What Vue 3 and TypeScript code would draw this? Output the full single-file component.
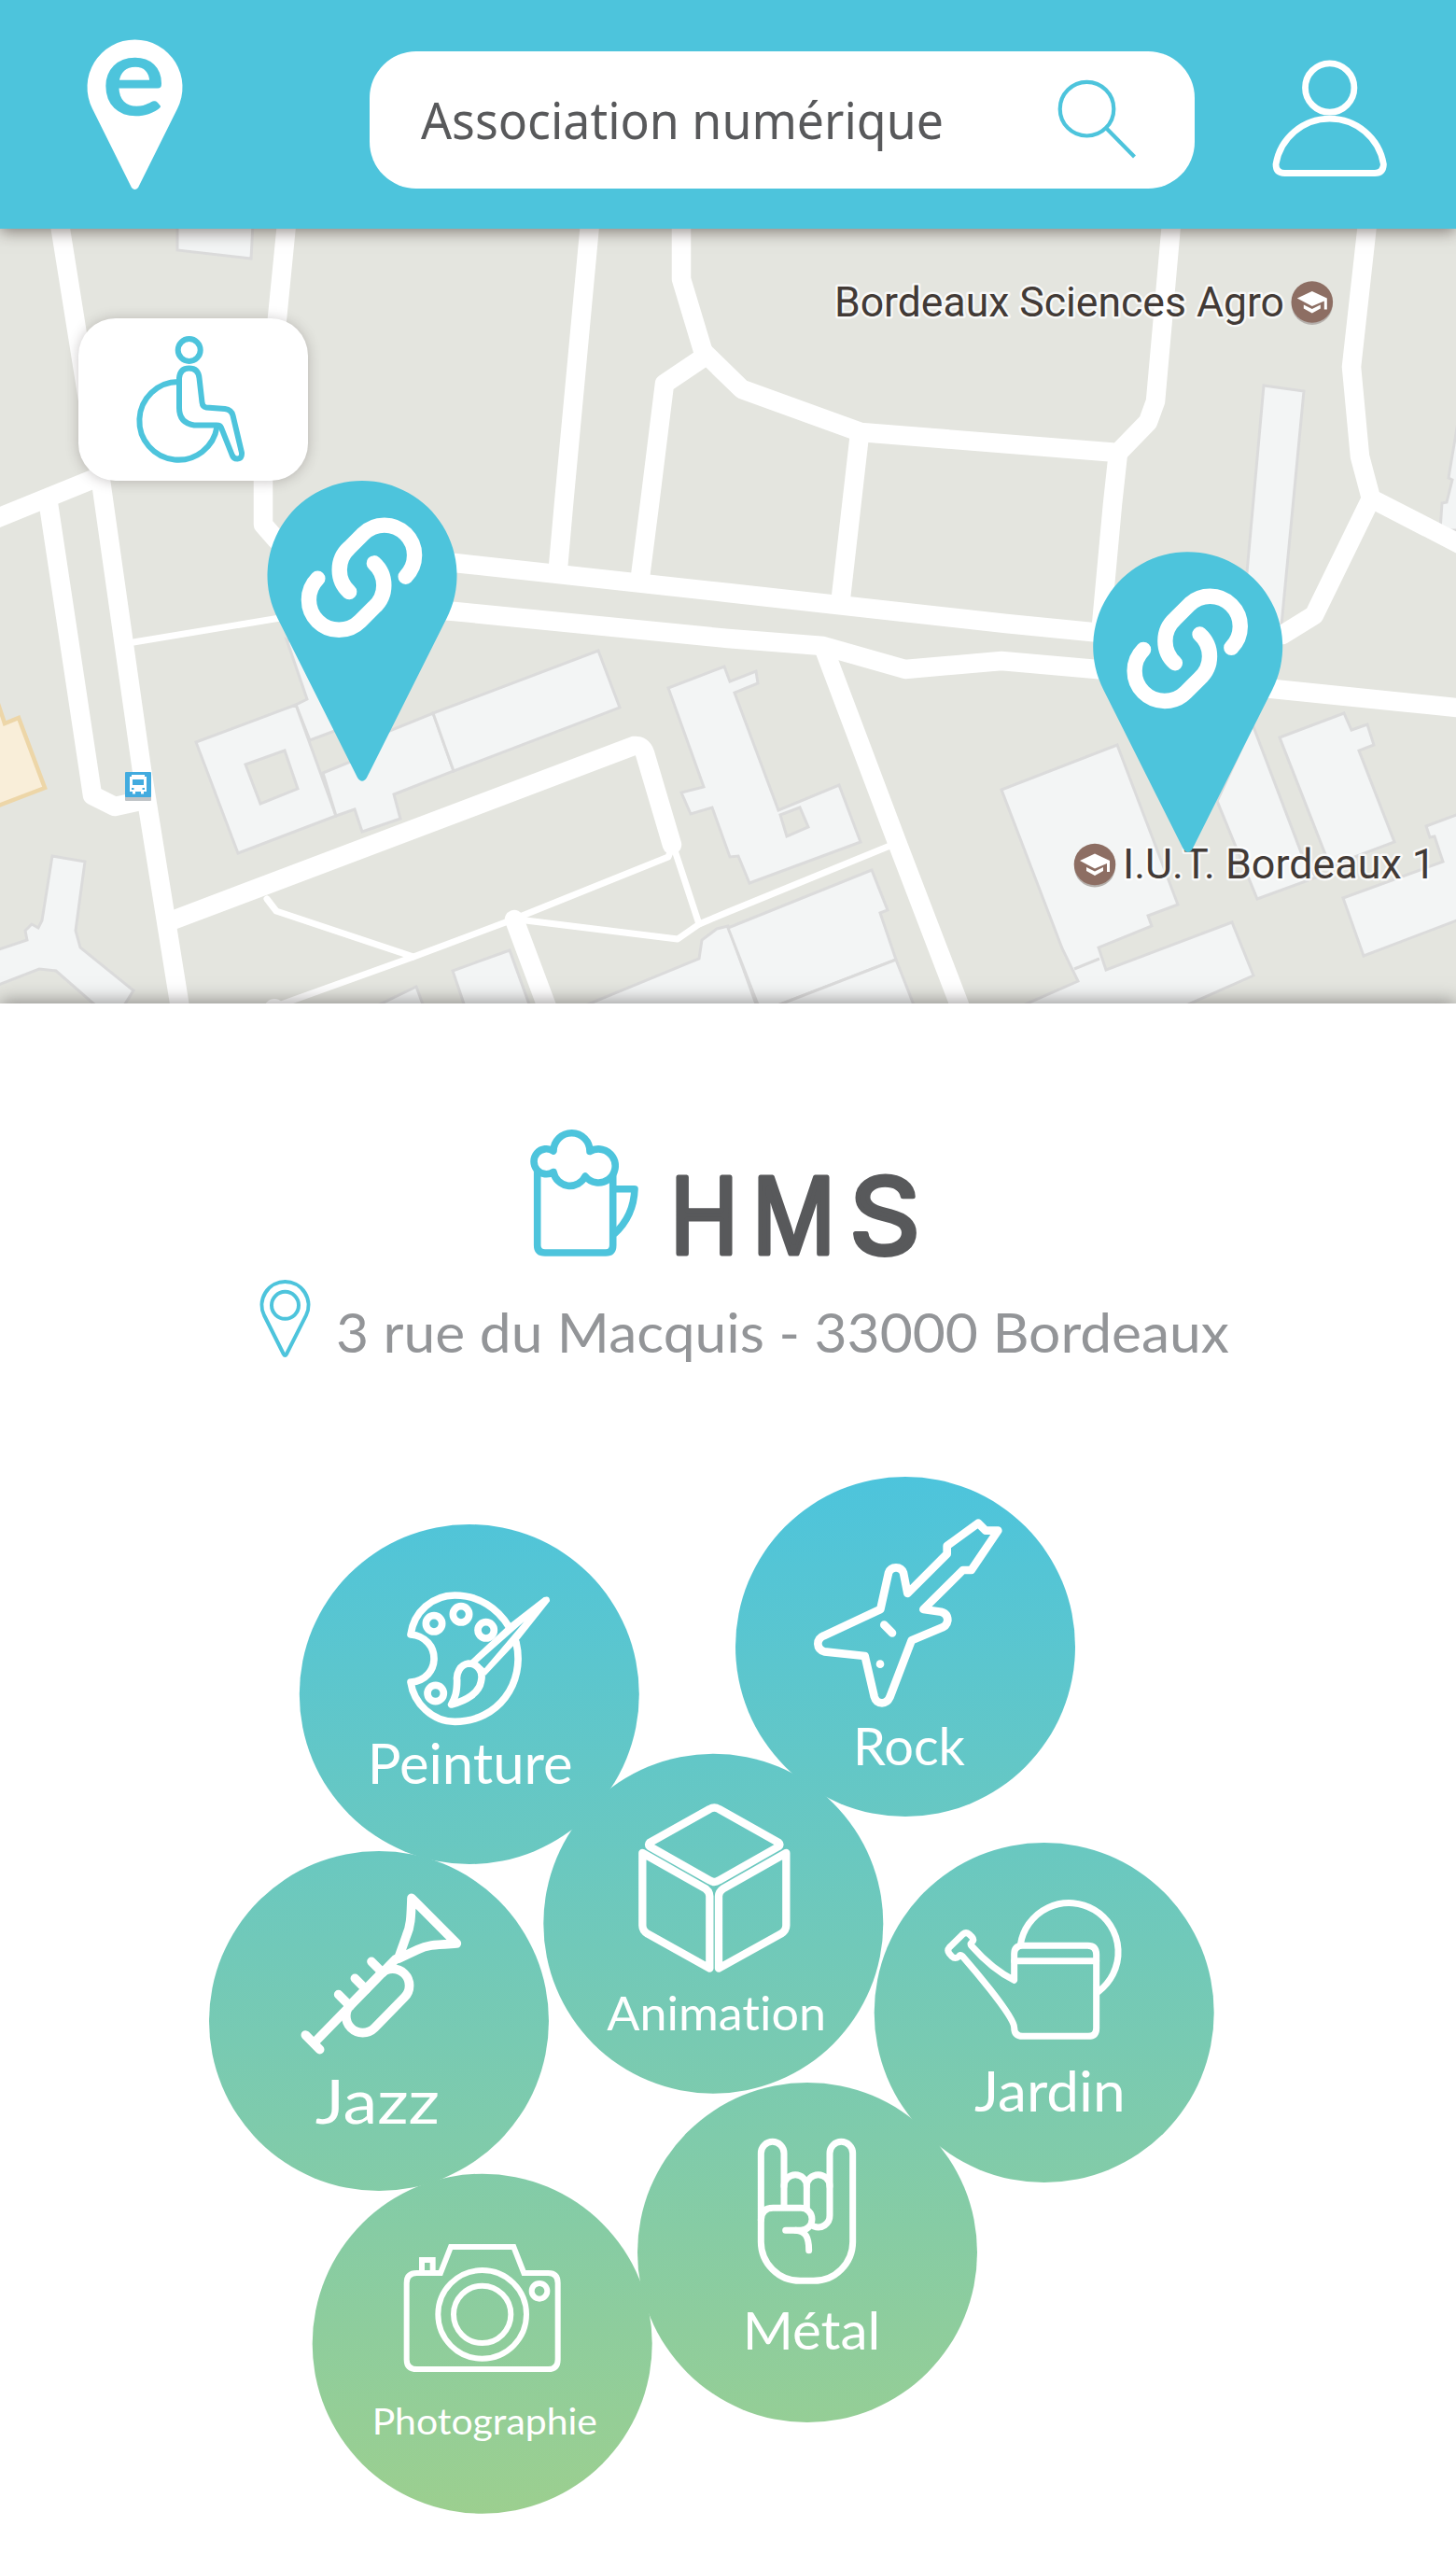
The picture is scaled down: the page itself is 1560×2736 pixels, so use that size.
<script setup lang="ts">
interface Label {
  text: string
  x: number
  y: number
  size: number
  length: number
}

interface Bubble {
  cx: number
  cy: number
  left: number
  top: number
  stroke: number
  label: Label
  lines: string[]
  rings?: number[][]
  fills?: string[]
  sharp?: boolean
}

const query = 'Association numérique'

const roads: string[] = [
  'M64 240L84 365L108 515L152 825L193 1080',
  'M-10 558L98 514',
  'M52 540L99 852L123 864L155 857',
  'M307 240L297 341L282 515V562L296 578L330 588L487 603L780 635L1078 668L1200 680L1374 680L1408 659L1469 534',
  'M300 640L487 655L780 684L882 692L970 717L1073 708L1175 717L1364 738L1570 759',
  'M632 240L604 540L598 608',
  'M730 240V299L755 382L712 411L696 540L686 618',
  'M755 378L795 417L922 463L1198 485L1230 452L1238 430L1255 240',
  'M921 465L901 640',
  'M1198 485L1192 540L1180 670',
  'M1465 240L1448 393L1457 489L1469 534L1570 586',
  'M182 987L679 799Q688 798 691 807L720 905',
  'M551 985L588 1084',
  'M884 698L961 902L1030 1082',
]

const paths: string[] = [
  'M143 688L300 662',
  'M286 963L296 976L443 1025',
  'M290 1080L443 1025L547 986L716 918L721 905L749 990',
  'M555 985L726 1006L749 990L780 977L956 905',
]

const buildings: string[] = [
  'M190 240V268L269 277L271 240Z',
  'M56 917L91 923L81 997L86 1015L143 1061L130 1082H108L60 1040L42 1038L-4 1056V1018L29 1007L27 997L34 990L41 994L45 986Z',
  'M307 685L329 749L317 755L332 793L380 775L340 700Z',
  'M210 795L317 755L360 874L255 914ZM263 819L305 804L319 845L279 861Z',
  'M346 828L378 815L400 790L464 764L486 826L422 851L429 877L388 891L380 867L360 874Z',
  'M464 764L641 697L664 758L486 826Z',
  'M716 737L776 714L782 730L810 719L812 732L787 742L834 868L899 841L922 902L803 946L791 917L782 918L763 865L740 872L730 849L754 843ZM836 873L857 865L866 886L843 896Z',
  'M485 1040L546 1018L570 1084H500Z',
  'M390 1084L446 1057L456 1084Z',
  'M610 1084L749 1027L752 1007L768 995L780 992L813 1084Z',
  'M780 994L934 932L951 975L943 978L960 1028L815 1084Z',
  'M960 1028L982 1084H815Z',
  'M1354 413L1397 419L1372 680H1330Z',
  'M1564 440L1552 512L1556 514L1550 538L1545 539L1543 568H1570Z',
  'M1073 846L1197 798L1262 969L1230 981L1234 992L1177 1015L1185 1039L1320 988L1343 1045L1255 1084H1080L1155 1051L1138 1016ZM1151 1038L1178 1027',
  'M1342 776L1394 913L1410 940L1347 963L1304 858Z',
  'M1371 790L1440 764L1448 782L1465 776L1472 798L1456 804L1494 902L1425 928Z',
  'M1566 871L1528 885L1532 897L1537 896L1546 923L1439 962L1461 1024L1566 984Z',
]

const pins: number[][] = [
  [388, 616.5],
  [1272.7, 692.7],
]

const schools: number[][] = [
  [1405.8, 323.5],
  [1173, 926],
]

const bubbles: Bubble[] = [
  {
    cx: 502.8, cy: 1815, left: 300, top: 1600, stroke: 23,
    label: { text: 'Peinture', x: 281, y: 933, size: 178, length: 660 },
    lines: [
      'M735 427C700 370 640 327 562 327C490 327 430 380 420 453C520 462 520 598 420 606C430 675 490 733 562 733C700 733 790 610 759 478',
      'M606 546C578 549 566 580 569 600C569 640 563 655 551 678C600 665 640 640 646 605C655 570 635 548 606 546Z',
    ],
    rings: [[495, 418, 26], [582, 388, 26], [662, 439, 26], [500, 642, 26]],
    fills: ['M608 540L740 417L848 333Q868 326 867 346L768 470L661 584ZM635 543L785 411L657 562Z'],
  },
  {
    cx: 970, cy: 1764, left: 780, top: 1570, stroke: 26,
    label: { text: 'Rock', x: 402, y: 963, size: 167, length: 360 },
    lines: [
      'M804 185L828 209H868L782 336H755L628 462L685 470Q706 475 706 498Q704 513 690 520L590 562L520 745Q512 763 495 763Q476 763 470 742L440 612L310 598Q290 592 289 573Q289 555 308 547L490 462L516 345Q522 328 540 328Q558 328 564 345L577 411L704 284V258Z',
      'M502 512L528 538',
      'M489 638V638.1',
    ],
  },
  {
    cx: 406, cy: 2165, left: 210, top: 1970, stroke: 29,
    label: { text: 'Jazz', x: 383, y: 915, size: 200, length: 400 },
    lines: [
      'M693 190L838 336C770 340 745 340 712 356L650 385L676 312C690 280 691 255 693 190Z',
      'M642 386L385 650',
      'M352 630L398 677',
      'M564 394L600 430M511 448L547 484M458 500L495 537',
      'M594 433A53.500 53.500 0 0 1 670 509L574 607A53.500 53.500 0 0 1 498 531Z',
    ],
  },
  {
    cx: 764.3, cy: 2060.7, left: 570, top: 1870, stroke: 25,
    label: { text: 'Animation', x: 241, y: 914, size: 150, length: 704 },
    lines: [
      'M571 204Q586 195 601 204L793 312Q800 318 793 324L601 433Q586 443 571 433L378 324Q372 318 378 312Z',
      'M355 345L558 460Q571 470 571 484V716L372 605Q355 594 355 578Z',
      'M817 345L614 460Q600 470 600 484V716L800 605Q817 594 817 578Z',
    ],
  },
  {
    cx: 1118.7, cy: 2156, left: 930, top: 1960, stroke: 21,
    label: { text: 'Jardin', x: 342, y: 906, size: 178, length: 485 },
    lines: [
      'M497 373H706Q734 373 734 402V638Q734 664 708 664H497Q470 664 470 636Q470 612 392 513Q350 460 303 406Q296 400 292 408Q280 417 270 408L262 399Q253 388 262 378L305 336Q315 328 325 336L335 346Q343 355 333 363Q328 368 333 374Q400 450 470 484V400Q470 373 497 373Z',
      'M470 422H734',
      'M490 370A158 158 0 1 1 741 520',
    ],
  },
  {
    cx: 865, cy: 2413, left: 670, top: 2220, stroke: 21,
    label: { text: 'Métal', x: 377, y: 890, size: 167, length: 443 },
    lines: [
      'M510 430V260A37 37 0 0 0 436 260V545A126 126 0 0 0 562 670H605A126 126 0 0 0 731 545V260A37 37 0 0 0 657 260V460A37 37 0 0 1 606 495',
      'M510 366A36.500 36.500 0 0 1 583 366V436',
      'M583 366A37 37 0 0 1 657 366',
      'M436 475Q437 436 475 436H564A36 36 0 0 1 564 508H515',
      'M548 508C580 510 590 530 590 572',
    ],
  },
  {
    cx: 516.7, cy: 2510.7, left: 320, top: 2320, stroke: 18, sharp: true,
    label: { text: 'Photographie', x: 236, y: 863, size: 118, length: 724 },
    lines: [
      'M456 345L489 261H691L724 345H802Q833 345 833 377V623Q833 654 802 654H380Q347 654 347 623V377Q347 345 380 345Z',
      'M396 345V303H431V345',
    ],
    rings: [[590, 478, 142], [590, 478, 92], [774, 403, 25]],
  },
]
</script>

<template>
  <div class="screen">
    <header class="topbar">
      <svg class="logo" viewBox="93 41 103 163" width="103" height="163">
        <path d="M99 116.500A51 51 0 1 1 190 116.500L148 201Q144.500 205 141 201Z" fill="#fff" />
        <text class="logo-letter" x="109.500" y="121.500" textLength="67" lengthAdjust="spacingAndGlyphs">e</text>
      </svg>
      <div class="search">
        <svg viewBox="0 0 570 148" width="570" height="148">
          <text class="query" x="0" y="94" textLength="560" lengthAdjust="spacingAndGlyphs">{{ query }}</text>
        </svg>
        <svg class="glass" viewBox="1132 84 86 86" width="86" height="86">
          <circle cx="1164.500" cy="116.700" r="28.800" />
          <path d="M1185.500 137.500L1215.500 168" />
        </svg>
      </div>
      <svg class="user" viewBox="1362 63 125 127" width="125" height="127">
        <circle cx="1424.700" cy="94" r="26.200" />
        <path d="M1367 176A58.500 58.500 0 0 1 1482.400 176Q1482 185.500 1473 185.500H1376.500Q1367 185.500 1367 176Z" />
      </svg>
    </header>

    <section class="map">
      <svg viewBox="0 245 1560 830" width="1560" height="830">
        <g class="buildings">
          <path d="M-4 748L5 775L20 769L48 844L-4 864Z" class="shop" />
          <path v-for="(d, i) in buildings" :key="i" :d="d" />
        </g>
        <g class="paths">
          <path v-for="(d, i) in paths" :key="i" :d="d" />
        </g>
        <g class="roads">
          <path v-for="(d, i) in roads" :key="i" :d="d" />
        </g>
        <circle cx="294" cy="1081" r="11" fill="#fff" />

        <g>
          <rect x="134" y="831" width="28" height="27" rx="1" fill="#bfc3c6" />
          <rect x="134" y="827" width="28" height="27" rx="1" fill="#42abdf" />
          <path d="M141 830H155V832H157V848H154V850.500H151V848H145V850.500H142V848H139V832H141ZM142 835V841H154V835ZM141 844V846H143.500V844ZM152.500 844V846H155V844Z" fill="#fff" fill-rule="evenodd" />
        </g>

        <g v-for="(s, i) in schools" :key="'s' + i" :transform="`translate(${s[0]} ${s[1]})`">
          <circle cy="2.500" r="22" fill="#b5b0ac" />
          <circle r="22.300" fill="#8d6e63" />
          <path d="M0 -11.500L16 -4V8H13V-1L0 4.500L-16 -4ZM-9 3L0 7.500L9 3V7L0 12L-9 7Z" fill="#fff" />
        </g>
        <text class="place" x="894" y="339" textLength="482" lengthAdjust="spacingAndGlyphs">Bordeaux Sciences Agro</text>
        <text class="place" x="1203" y="941" textLength="335" lengthAdjust="spacingAndGlyphs">I.U.T. Bordeaux 1</text>

        <g v-for="(p, i) in pins" :key="'p' + i" :transform="`translate(${p[0]} ${p[1]})`">
          <path d="M-90.500 46A101.500 101.500 0 1 1 90.500 46L5 216.500Q0 224 -5 216.500Z" fill="#4dc4dc" />
          <g class="link" transform="translate(-.5 2.200) scale(1.025)">
            <path d="M46 -1A31 31 0 0 0 1.500 -45.500L-13 -31A31 31 0 0 0 -13 15" />
            <path d="M-46 1A31 31 0 0 0 -1.500 45.500L13 31A31 31 0 0 0 13 -15" />
          </g>
        </g>
      </svg>
      <div class="filter">
        <svg viewBox="84 341 246 174" width="246" height="174">
          <circle cx="202.700" cy="375" r="12" />
          <path d="M192 405Q193 394.500 202.500 394.500Q212.500 394.500 213.500 405L216.500 431Q217 436 221 436.500L241 438Q248 439 249.500 445L259 485Q259.500 491.500 254 491.500Q250 491.500 248.500 487L237 458Q236 455.500 232 455.500H208Q192 453 192 437Z" />
          <path d="M191 409A41.800 41.800 0 1 0 232.500 457" />
        </svg>
      </div>
    </section>

    <main class="details">
      <svg class="title" viewBox="566 1208 428 142" width="428" height="142">
        <g class="mug">
          <path d="M575.700 1252V1334Q575.700 1342 584 1342H649Q656.700 1342 656.700 1334V1256" />
          <path d="M656.700 1273.700H680Q679 1303 658 1322" />
          <path d="M593 1233A19.500 19.500 0 0 1 632 1233.500A18 18 0 1 1 627 1260A18 18 0 0 1 593 1255.500A13.500 13.500 0 1 1 593 1233Z" />
        </g>
        <text class="name" y="1342.500"><tspan x="718" textLength="73" lengthAdjust="spacingAndGlyphs">H</tspan><tspan x="806" textLength="89" lengthAdjust="spacingAndGlyphs">M</tspan><tspan x="910" textLength="76" lengthAdjust="spacingAndGlyphs">S</tspan></text>
      </svg>
      <div class="address">
        <svg class="marker" viewBox="277 1369 57 87" width="57" height="87">
          <path d="M283 1409A25 25 0 1 1 328 1409L307 1450.500Q305.400 1453.500 303.800 1450.500Z" />
          <circle cx="305.500" cy="1398.300" r="14.500" />
        </svg>
        <svg viewBox="357 1390 964 76" width="964" height="76">
          <text class="street" x="360" y="1449" textLength="957" lengthAdjust="spacingAndGlyphs">3 rue du Macquis - 33000 Bordeaux</text>
        </svg>
      </div>
      <svg class="bubbles" viewBox="0 1560 1560 1176" width="1560" height="1176">
        <defs>
          <linearGradient id="tide" gradientUnits="userSpaceOnUse" x1="0" y1="1582" x2="0" y2="2693">
            <stop offset="0" stop-color="#4dc4dc" />
            <stop offset="1" stop-color="#9ccf8f" />
          </linearGradient>
        </defs>
        <circle v-for="b in bubbles" :key="b.label.text" :cx="b.cx" :cy="b.cy" r="182" fill="url(#tide)" />
        <svg
          v-for="b in bubbles"
          :key="b.label.text + '-icon'"
          :x="b.left"
          :y="b.top"
          width="400"
          height="400"
          viewBox="0 0 1200 1200"
        >
          <g class="icon" :class="{ sharp: b.sharp }" :stroke-width="b.stroke">
            <path v-for="(d, i) in b.lines" :key="i" :d="d" />
            <circle v-for="(r, i) in b.rings" :key="'r' + i" :cx="r[0]" :cy="r[1]" :r="r[2]" />
          </g>
          <path v-for="(d, i) in b.fills" :key="'f' + i" :d="d" fill="#fff" fill-rule="evenodd" />
          <text
            class="label"
            :x="b.label.x"
            :y="b.label.y"
            :font-size="b.label.size"
            :textLength="b.label.length"
            lengthAdjust="spacingAndGlyphs"
          >{{ b.label.text }}</text>
        </svg>
      </svg>
    </main>
  </div>
</template>

<style>
body {
  margin: 0;
  background: #fff;
}
</style>

<style scoped>
.screen {
  width: 1560px;
  height: 2736px;
  overflow: hidden;
  background: #fff;
  font-family: Lato, sans-serif;
}
svg {
  display: block;
  flex: none;
  overflow: visible;
}
.topbar {
  position: relative;
  z-index: 2;
  box-sizing: border-box;
  height: 245px;
  padding: 0 73px 0 93px;
  display: flex;
  align-items: flex-start;
  background: #4dc4dc;
  box-shadow: 0 3px 16px rgba(50, 35, 30, 0.55);
}
.logo {
  margin-top: 41px;
}
.logo-letter {
  font-family: Lato, sans-serif;
  font-size: 115px;
  fill: #4dc4dc;
  stroke: #4dc4dc;
  stroke-width: 2.500;
  stroke-linejoin: round;
}
.search {
  box-sizing: border-box;
  width: 884px;
  height: 147px;
  margin: 54.500px 0 0 200px;
  padding: 0 62px 0 55px;
  display: flex;
  justify-content: space-between;
  border-radius: 50px;
  background: #fff;
}
.query {
  font-family: "Noto Sans", "Open Sans", sans-serif;
  font-size: 55.500px;
  fill: #58595b;
}
.glass {
  margin-top: 29.500px;
  fill: none;
  stroke: #4dc4dc;
  stroke-width: 4.200;
}
.user {
  margin: 63px 0 0 82px;
  fill: none;
  stroke: #fff;
  stroke-width: 6.800;
}
.map {
  position: relative;
  height: 830px;
  overflow: hidden;
  background: #e4e5df;
}
.buildings path {
  fill: #f3f5f5;
  fill-rule: evenodd;
  stroke: #dbdbdb;
  stroke-width: 3;
}
.buildings .shop {
  fill: #f9eed9;
  stroke: #edd6a8;
  stroke-width: 4.500;
}
.roads path,
.paths path {
  fill: none;
  stroke: #fff;
  stroke-width: 20.500;
  stroke-linejoin: round;
  stroke-linecap: round;
}
.paths path {
  stroke-width: 7;
}
.place {
  font-family: Roboto, sans-serif;
  font-size: 44.500px;
  fill: #423a36;
  stroke: rgba(255, 255, 255, 0.75);
  stroke-width: 5;
  stroke-linejoin: round;
  paint-order: stroke;
}
.link path {
  fill: none;
  stroke: #fff;
  stroke-width: 16;
  stroke-linecap: round;
}
.filter {
  position: absolute;
  left: 84px;
  top: 96px;
  width: 246px;
  height: 174px;
  border-radius: 40px;
  background: #fff;
  box-shadow: 0 1px 14px rgba(60, 50, 50, 0.28);
}
.filter svg {
  fill: none;
  stroke: #4dc4dc;
  stroke-width: 6;
  stroke-linejoin: round;
}
.details {
  position: relative;
  z-index: 1;
  height: 1661px;
  display: flex;
  flex-direction: column;
  background: #fff;
  box-shadow: 0 -2px 18px rgba(50, 45, 45, 0.5);
}
.title {
  margin: 133px 0 0 566px;
}
.mug path {
  fill: none;
  stroke: #4dc4dc;
  stroke-width: 7.600;
  stroke-linejoin: round;
}
.mug path:last-child {
  fill: #fff;
}
.name {
  font-family: Inter, sans-serif;
  font-size: 113px;
  fill: #58595b;
  stroke: #58595b;
  stroke-width: 5;
  stroke-linejoin: round;
}
.address {
  display: flex;
  align-items: flex-start;
  gap: 23px;
  margin: 19px 0 0 277px;
}
.address svg + svg {
  margin-top: 21px;
}
.marker {
  fill: none;
  stroke: #4dc4dc;
  stroke-width: 4;
}
.street {
  font-size: 59px;
  fill: #939598;
}
.bubbles {
  margin-top: 94px;
}
.icon {
  fill: none;
  stroke: #fff;
  stroke-linejoin: round;
  stroke-linecap: round;
}
.icon.sharp {
  stroke-linejoin: miter;
  stroke-linecap: butt;
}
.label {
  fill: #fff;
  font-variant-ligatures: none;
}
</style>
